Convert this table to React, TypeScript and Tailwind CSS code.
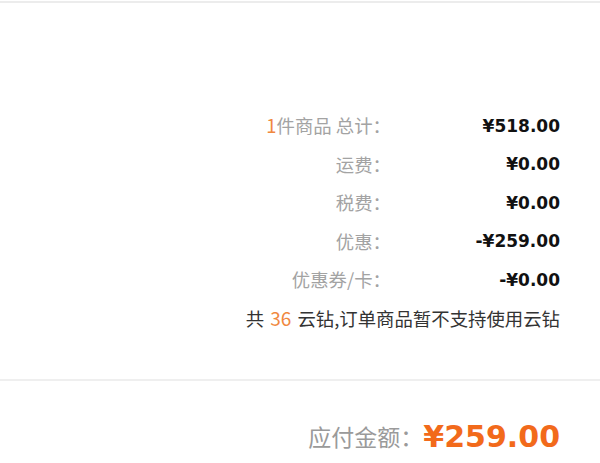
export default function App() {
  const cjk = { fontFamily: '"Noto Sans CJK SC", "Noto Sans", sans-serif' };
  const num = { fontFamily: '"DejaVu Sans", Verdana, sans-serif' };
  const rows: { label: React.ReactNode; value: string }[] = [
    {
      label: (
        <>
          <span className="text-[#f0883e]">1</span>件商品 总计：
        </>
      ),
      value: "¥518.00",
    },
    { label: "运费：", value: "¥0.00" },
    { label: "税费：", value: "¥0.00" },
    { label: "优惠：", value: "-¥259.00" },
    { label: "优惠券/卡：", value: "-¥0.00" },
  ];
  return (
    <div className="w-[600px] h-[463px] bg-white overflow-hidden">
      <div className="mt-px h-[2px] bg-[#ececec]" />
      <div className="pt-[104px] pr-[40px]">
        {rows.map((r, i) => (
          <div key={i} className="flex justify-end items-center h-[38.5px]">
            <div className="text-[18.4px] text-[#a3a3a3] text-right" style={cjk}>
              {r.label}
            </div>
            <div className="w-[169px] text-right text-[17px] font-bold text-[#111]" style={num}>
              {r.value}
            </div>
          </div>
        ))}
        <div className="flex justify-end items-center h-[38.5px] text-[18.4px] text-[#333]" style={cjk}>
          <span>
            共 <span className="mx-[2px] text-[19px] text-[#f0883e]">36</span> 云钻,订单商品暂不支持使用云钻
          </span>
        </div>
      </div>
      <div className="mt-[41px] h-[2px] bg-[#efefef]" />
      <div className="flex justify-end items-center h-[112px] pr-[40px] pb-[2px]">
        <span className="text-[23px] text-[#9a9a9a]" style={cjk}>
          应付金额：
        </span>
        <span className="text-[30px] font-bold text-[#f26a1b]" style={num}>
          ¥259.00
        </span>
      </div>
    </div>
  );
}
